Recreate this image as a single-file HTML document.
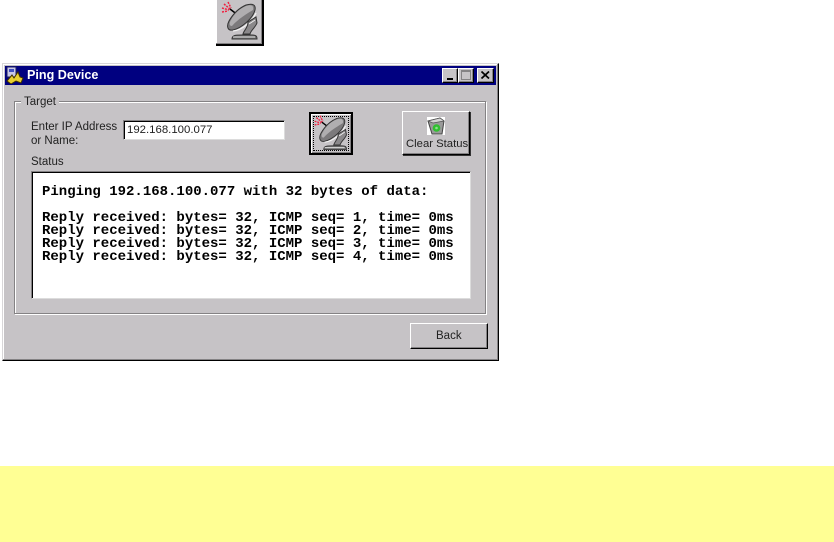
<!DOCTYPE html>
<html><head><meta charset="utf-8"><style>
html,body{margin:0;padding:0;background:#fff}
body{width:834px;height:542px;position:relative;overflow:hidden;font-family:"Liberation Sans",sans-serif;font-size:11px;color:#000}
.a{position:absolute}
.t{position:absolute;white-space:nowrap;line-height:14px;font-size:11.5px;color:#222}
.btn{position:absolute;box-sizing:border-box;background:#c6c3c6;border:1px solid;border-color:#fff #000 #000 #fff;box-shadow:inset -1px -1px 0 #848284}
.mono{position:absolute;left:42px;font:bold 14px/13px "Liberation Mono",monospace;white-space:pre;color:#000}
.wb{position:absolute;top:68px;width:16px;height:15px;box-sizing:border-box;background:#c6c3c6;border:1px solid;border-color:#fff #000 #000 #fff;box-shadow:inset -1px -1px 0 #848284}
</style></head><body>
<svg width="0" height="0" style="position:absolute"><defs>
<g id="dish">
<path d="M10 2 L13 8 M6 4 L12 9 M4 8 L11 10 M4 12 L10 11" stroke="#f02040" stroke-width="1.5" stroke-dasharray="2 1" fill="none"/>
<path d="M12 9 L25 19" stroke="#000" stroke-width="1.5"/>
<path d="M28 5 C35 3 38 5 37 10 C35 18 24 28 15 30 C10 31 8 27 11 21 C15 14 21 8 28 5Z" fill="#7c7a7c" stroke="#333" stroke-width="1"/>
<path d="M28 6 C34 4 36 6 35 10 C30 13 20 19 14 26 C11 26 11 23 13 20 C16 14 21 9 28 6Z" fill="#b0aeb0"/>
<path d="M15 31 C24 30 33 23 38 13" stroke="#f4f4f4" stroke-width="1.2" fill="none"/>
<path d="M30 22 L38 17 L39 23 C37 28 33 30 32 34 L25 34 C26 30 30 28 30 22Z" fill="#8a888a" stroke="#333" stroke-width="1"/>
<path d="M31 24 L37 20" stroke="#eee" stroke-width="1"/>
<path d="M14 39 C14 35 18 35 24 35 L34 35 C38 35 39 36 39 39 Z" fill="#777" stroke="#333" stroke-width="1"/>
<path d="M15 37 H37" stroke="#ddd" stroke-width="1"/>
</g></defs></svg>

<!-- top icon -->
<div class="a" style="left:216px;top:-2px;width:48px;height:48px;box-sizing:border-box;background:#c6c3c6;border-right:2px solid #000;border-bottom:2px solid #000;box-shadow:inset -1px -1px 0 #848284,inset 1px 1px 0 #fff"></div>
<svg class="a" style="left:218px;top:0" width="44" height="44" viewBox="0 0 44 44"><use href="#dish" transform="translate(0,0)"/></svg>

<!-- window -->
<div class="a" style="left:2px;top:63px;width:497px;height:298px;box-sizing:border-box;background:#c6c3c6;border:1px solid;border-color:#d8d6d8 #000 #000 #d8d6d8;box-shadow:inset -1px -1px 0 #848284,inset 1px 1px 0 #fff"></div>
<div class="a" style="left:5px;top:66px;width:491px;height:19px;background:#000080"></div>
<svg class="a" style="left:6px;top:66px" width="18" height="18" viewBox="0 0 18 18">
<rect x="1" y="1" width="9" height="10" fill="#c8c8e8" stroke="#202060"/><rect x="3" y="3" width="5" height="3" fill="#4050c0"/>
<path d="M1 15 L6 9 L8 12 L12 6 L14 11 L17 12 L15 17 L10 15 L5 18Z" fill="#e8d030" stroke="#403000" stroke-width="1"/>
</svg>
<div class="t" style="left:27px;top:68px;color:#fff;font-weight:bold;font-size:12.6px">Ping Device</div>
<div class="wb" style="left:442px"><div class="a" style="left:4px;top:9px;width:6px;height:2px;background:#000"></div></div>
<div class="wb" style="left:458px"><div class="a" style="left:2px;top:1px;width:10px;height:10px;box-sizing:border-box;border:1px solid #848284;border-top-width:2px"></div></div>
<div class="wb" style="left:477px;width:17px">
<svg class="a" style="left:3px;top:2px" width="9" height="8" viewBox="0 0 9 8"><path d="M0.5 0.5 L8 7.5 M8 0.5 L0.5 7.5" stroke="#000" stroke-width="1.7"/></svg></div>

<!-- group -->
<div class="a" style="left:14px;top:101px;width:472px;height:213px;box-sizing:border-box;border:1px solid #848284;box-shadow:1px 1px 0 #fff,inset 1px 1px 0 #fff"></div>
<div class="t" style="left:21px;top:95px;background:#c6c3c6;padding:0 3px 0 3px">Target</div>
<div class="t" style="left:31px;top:120px">Enter IP Address<br>or Name:</div>
<div class="t" style="left:31px;top:155px">Status</div>

<!-- input -->
<div class="a" style="left:123px;top:120px;width:162px;height:20px;box-sizing:border-box;background:#fff;border:1px solid;border-color:#848284 #dcdcdc #dcdcdc #848284;box-shadow:inset 1px 1px 0 #000"></div>
<div class="t" style="left:127px;top:123px;font-size:11.4px">192.168.100.077</div>

<!-- satellite button -->
<div class="a" style="left:309px;top:112px;width:44px;height:43px;box-sizing:border-box;background:#c6c3c6;border:2px solid #000;box-shadow:inset 1px 1px 0 #fff,inset -1px -1px 0 #848284"></div>
<div class="a" style="left:313px;top:116px;width:36px;height:35px;box-sizing:border-box;border:1px dotted #000"></div>
<svg class="a" style="left:311px;top:114px" width="40" height="40" viewBox="0 0 44 44"><use href="#dish"/></svg>

<!-- clear button -->
<div class="btn" style="left:402px;top:111px;width:68px;height:44px;box-shadow:inset -1px -1px 0 #848284,1px 1px 0 #333"></div>
<svg class="a" style="left:427px;top:117px" width="18" height="18" viewBox="0 0 18 18">
<rect x="0" y="0" width="18" height="18" fill="#fff"/>
<path d="M1 4 L13 1 L17 4 L15 17 L5 17Z" fill="#9a9a9a" stroke="#444"/>
<path d="M1 4 L13 1 L17 4 L6 6Z" fill="#d4d4d4" stroke="#555" stroke-width=".7"/>
<circle cx="9.5" cy="11" r="3.8" fill="#30c030"/><circle cx="9.5" cy="11" r="1.3" fill="#8fe08f"/>
</svg>
<div class="t" style="left:406px;top:137px;font-size:11.3px">Clear Status</div>

<!-- status -->
<div class="a" style="left:31px;top:171px;width:440px;height:128px;box-sizing:border-box;background:#fff;border:1px solid;border-color:#848284 #dcdcdc #dcdcdc #848284;box-shadow:inset 1px 1px 0 #000"></div>
<div class="mono" style="top:186px">Pinging 192.168.100.077 with 32 bytes of data:</div>
<div class="mono" style="top:212px">Reply received: bytes= 32, ICMP seq= 1, time= 0ms
Reply received: bytes= 32, ICMP seq= 2, time= 0ms
Reply received: bytes= 32, ICMP seq= 3, time= 0ms
Reply received: bytes= 32, ICMP seq= 4, time= 0ms</div>

<!-- back -->
<div class="btn" style="left:410px;top:323px;width:78px;height:26px"></div>
<div class="t" style="left:436px;top:329px;font-size:11.5px">Back</div>

<!-- yellow -->
<div class="a" style="left:0;top:466px;width:834px;height:76px;background:#ffff94"></div>
</body></html>
